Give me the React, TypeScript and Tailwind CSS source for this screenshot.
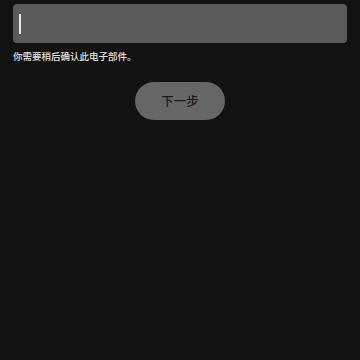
export default function App() {
  return (
    <div
      className="w-[360px] h-[360px] bg-[#121212] px-[13px] pt-[4px] flex flex-col"
      style={{ fontFamily: '"Noto Sans CJK SC", "Noto Sans", sans-serif' }}
    >
      <div className="h-[39px] w-full rounded-[4px] bg-[#5b5b5b] flex items-center pl-[6px]">
        <div className="w-[2px] h-[20px] bg-[#e8e8e8]" />
      </div>
      <div className="mt-[6px] text-[9.5px] leading-[14px] font-medium text-[#e0e0e0]">
        你需要稍后确认此电子部件。
      </div>
      <div className="mt-[19px] flex justify-center">
        <div className="w-[90px] h-[38px] rounded-full bg-[#666666] flex items-center justify-center text-[12.5px] font-medium text-[#1a1a1a]">
          下一步
        </div>
      </div>
    </div>
  );
}
